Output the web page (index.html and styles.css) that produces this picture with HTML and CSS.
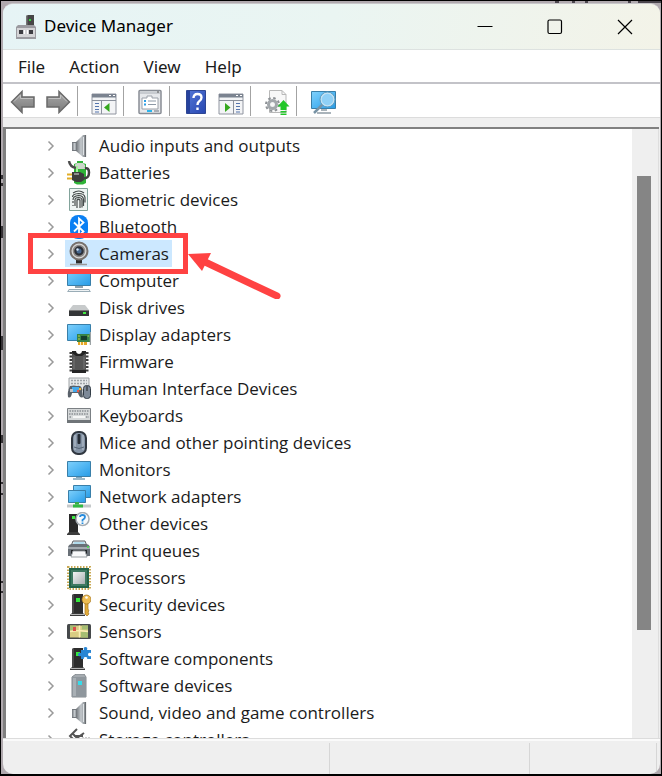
FILE: index.html
```html
<!DOCTYPE html>
<html lang="en">
<head>
<meta charset="utf-8">
<title>Device Manager</title>
<link rel="stylesheet" href="styles.css">
</head>
<body>
<svg class="defs" aria-hidden="true">
  <defs>
    <linearGradient id="screen" x1="0" y1="0" x2="1" y2="1"><stop offset="0" stop-color="#7fd0fb"/><stop offset=".55" stop-color="#4db4f2"/><stop offset="1" stop-color="#279be6"/></linearGradient>
    <linearGradient id="metal" x1="0" y1="0" x2="1" y2="0"><stop offset="0" stop-color="#6f7479"/><stop offset=".5" stop-color="#c3c8cc"/><stop offset="1" stop-color="#7d8287"/></linearGradient>
    <linearGradient id="arrow" x1="0" y1="0" x2="0" y2="1"><stop offset="0" stop-color="#a9a9a9"/><stop offset="1" stop-color="#7a7a7a"/></linearGradient>
    <linearGradient id="help" x1="0" y1="0" x2="1" y2="1"><stop offset="0" stop-color="#5478d8"/><stop offset="1" stop-color="#2746b0"/></linearGradient>
    <linearGradient id="die" x1="0" y1="0" x2="1" y2="1"><stop offset="0" stop-color="#f2f4f4"/><stop offset="1" stop-color="#a9b0b2"/></linearGradient>
    <symbol id="chevron" viewBox="0 0 8 14"><path d="M1.500 2.500 6 7l-4.500 4.500" fill="none" stroke="#9a9a9a" stroke-width="1.500"/></symbol>
    <symbol id="speaker" viewBox="0 0 24 24"><path d="M5 8h5v9H5z" fill="url(#metal)"/><path d="M9 8l7-7h3v22h-3l-7-6z" fill="url(#metal)"/><path d="M5 8h5v1H5zM5 16h5v1H5z" fill="#74797e"/><path d="M18.500 1v22" stroke="#6a6e72" stroke-width="1.200"/><path d="M16.500 3v18" stroke="#dfe3e6"/></symbol>
    <symbol id="tower" viewBox="0 0 24 24"><path d="M5 2l2-1h9v19H5z" fill="#2d2d2d"/><path d="M5 2v18h2V1z" fill="#4a4a4a"/><path d="M3 22l2-2h11l2 2v1H3z" fill="#3a3a3a"/><path d="M4 21.500h13" stroke="#b5b5b5"/><path d="M9 5h4v4H9z" fill="#35e83c"/></symbol>
  </defs>
</svg>
<div class="desktop">
<main class="window">
  <header class="titlebar">
    <svg class="app-icon" viewBox="0 0 20 24" aria-hidden="true"><path d="M10 1l2-1h6v12h-8z" fill="#464646"/><path d="M10 1v11h1.500V0z" fill="#747474"/><path d="M13 4h2v2h-2z" fill="#2fd63a"/><path d="M0 12l2-2h16l2 2v12H0z" fill="#9b9ba0"/><path d="M1 13h18v9H1z" fill="#d4d4d6"/><path d="M3 15h4v4H3zM13 15h4v4h-4z" fill="#3d3d42"/><path d="M8 15h1v4H8zM11 15h1v4h-1z" fill="#fff"/></svg>
    <h1>Device Manager</h1>
    <button class="caption" aria-label="Minimize"><svg viewBox="0 0 16 16"><path d="M.5 7.500h15"/></svg></button>
    <button class="caption" aria-label="Maximize"><svg viewBox="0 0 16 16"><rect x="1" y="1" width="13.500" height="13.500" rx="1.500"/></svg></button>
    <button class="caption" aria-label="Close"><svg viewBox="0 0 16 16"><path d="M1 1l14 14M15 1L1 15"/></svg></button>
  </header>
  <nav class="menu">
    <button>File</button><button>Action</button><button>View</button><button>Help</button>
  </nav>
  <div class="toolbar" role="toolbar" aria-label="Tools">
    <button aria-label="Back"><svg viewBox="0 0 26 26"><path d="M1.500 13 12 2.500V8h12v10H12v5.500z" fill="url(#arrow)" stroke="#6a6a6a" stroke-width="1.500"/><path d="M4 12.500l6.500-6.500v3.500H23" fill="none" stroke="#c2c2c2"/></svg></button>
    <button aria-label="Forward"><svg viewBox="0 0 26 26"><path d="M24.500 13 14 2.500V8H2v10h12v5.500z" fill="url(#arrow)" stroke="#6a6a6a" stroke-width="1.500"/><path d="M3.500 9.500h12V6l6.500 6.500" fill="none" stroke="#c2c2c2"/></svg></button>
    <i class="separator"></i>
    <button aria-label="Show console tree"><svg viewBox="0 0 26 26"><path d="M1 5h24v20H1z" fill="#f3f4f6" stroke="#9095a0"/><path d="M1 5h24v3.500H1z" fill="#7b8390"/><path d="M18 6.500h2M22 6.500h2" stroke="#fff"/><path d="M1 11.500h24M10.500 12v13" stroke="#8b919c"/><path d="M4 14.500h4M4 17.500h4M4 20.500h4M4 23h4" stroke="#5575ad"/><path d="M18.500 14v9L13 18.500z" fill="#36a81e"/></svg></button>
    <i class="separator"></i>
    <button aria-label="Properties"><svg viewBox="0 0 26 26"><rect x="2" y="1.500" width="22" height="23" rx="1" fill="#e6e8eb" stroke="#888d95" stroke-width="1.500"/><path d="M3 4h20" stroke="#a9aeb5"/><path d="M20 3h2" stroke="#555"/><path d="M5 9h5V7h5v2h6v11H5z" fill="#fff" stroke="#9ba0a8"/><path d="M7 12h2M7 15.500h2" stroke="#2b9de4" stroke-width="2"/><path d="M11 12h8M11 15.500h8" stroke="#8d99a6"/><path d="M10 22h5" stroke="#2bb5ed" stroke-width="2"/><path d="M17 22h5" stroke="#a9aeb5" stroke-width="2"/></svg></button>
    <i class="separator"></i>
    <button aria-label="Help"><svg viewBox="0 0 26 26"><path d="M3.500 1.500h19v23h-19z" fill="url(#help)" stroke="#2e4694"/><path d="M4 2h3v22H4z" fill="#26429d"/><path d="M10.500 9q0-4 4-4t4 3.500q0 2.500-2.500 4-1.500 1-1.500 3.500M14.500 18.500v2.500" fill="none" stroke="#fff" stroke-width="2.400"/></svg></button>
    <button aria-label="Show action pane"><svg viewBox="0 0 26 26"><path d="M1 5h24v20H1z" fill="#f3f4f6" stroke="#9095a0"/><path d="M1 5h24v3.500H1z" fill="#7b8390"/><path d="M18 6.500h2M22 6.500h2" stroke="#fff"/><path d="M1 11.500h24M15.500 12v13" stroke="#8b919c"/><path d="M18 14.500h4M18 17.500h4M18 20.500h4M18 23h4" stroke="#5575ad"/><path d="M7 14v9l5.500-4.500z" fill="#36a81e"/></svg></button>
    <i class="separator"></i>
    <button aria-label="Update driver"><svg viewBox="0 0 26 26"><path d="M5.500 1.500H18l4 4v18H5.500z" fill="#f8f8f8" stroke="#b8b8b8"/><path d="M18 1.500v4h4" fill="none" stroke="#b8b8b8"/><circle cx="8.500" cy="15.500" r="6.500" fill="none" stroke="#8d9195" stroke-width="2" stroke-dasharray="2.500 2.600"/><circle cx="8.500" cy="15.500" r="4" fill="#e6e8e9" stroke="#a2a7ab" stroke-width="3"/><circle cx="8.500" cy="15.500" r="2" fill="#f7f7f7"/><path d="M19.500 11l6 6.500h-3V21h-6v-3.500h-3z" fill="#23c729"/><path d="M16.500 22h6v1.500h-6zM16.500 24.500h6V26h-6z" fill="#23c729"/></svg></button>
    <i class="separator"></i>
    <button aria-label="Scan for hardware changes"><svg viewBox="0 0 26 26"><path d="M1.500 2.500h24v17h-24z" fill="url(#screen)" stroke="#397fa9"/><path d="M7 24h14M11 21h6" stroke="#aab4bb" stroke-width="2"/><path d="M12.500 15.500 4 24" stroke="#7893a5" stroke-width="2.500"/><circle cx="17.500" cy="10.500" r="6.500" fill="#8fd0f6" stroke="#c4e2f3" stroke-width="1.500"/><circle cx="17.500" cy="10.500" r="7.500" fill="none" stroke="#5f9dc0"/></svg></button>
  </div>
  <section class="content">
    <ul class="tree" id="devices" role="tree" aria-label="Devices">
      <li role="treeitem"><button aria-label="Expand"><svg><use href="#chevron"/></svg></button><svg class="icon"><use href="#speaker"/></svg><span>Audio inputs and outputs</span></li>
      <li role="treeitem"><button aria-label="Expand"><svg><use href="#chevron"/></svg></button><svg class="icon" viewBox="0 0 24 24"><path d="M7 3l3-1V0h6v2l3 1v19l-3 1.500h-6L7 22z" fill="#2eb337"/><path d="M8 3.500 10 2h6l2 2v4H8z" fill="#ccd6ca"/><path d="M10 5v14" stroke="#a5f29c" stroke-width="2"/><path d="M2 0q1 6 7 7" fill="none" stroke="#4b4b4b" stroke-width="2.500"/><path d="M5 11h8l4 2v6l-3 2H9l-4-2z" fill="#3d3d3d"/><path d="M7 13h5" stroke="#aaa" stroke-width="1.500"/><path d="M0 13.500h5M0 17.500h5" stroke="#e1ad28" stroke-width="2"/><path d="M16 17q6 1 6-5.500 0-5-4-4" fill="none" stroke="#414141" stroke-width="2.500"/></svg><span>Batteries</span></li>
      <li role="treeitem"><button aria-label="Expand"><svg><use href="#chevron"/></svg></button><svg class="icon" viewBox="0 0 24 24"><path d="M2.500.5h18v22h-18z" fill="#eff5f3" stroke="#82a39b"/><g fill="none" stroke="#454b4a"><path d="M6 5q6-4 11 0M5.500 9q0-3 6-3.500 6 0 6.500 4v5M6 12q0-4 5.500-4.500 5 0 5 4.500v6M6 15v-2M8 18v-6q0-2.500 3.500-2.500t3.500 3v7M10 20v-8q1.500-1.500 3 0v8M6 17v1" stroke-width="1.200"/></g></svg><span>Biometric devices</span></li>
      <li role="treeitem"><button aria-label="Expand"><svg><use href="#chevron"/></svg></button><svg class="icon" viewBox="0 0 24 24"><rect x="3" y="0" width="18" height="24" rx="8" fill="#0b80f3"/><path d="M7 7.500l9.500 9-4.500 4V3.500l4.500 4-9.500 9" fill="none" stroke="#fff" stroke-width="1.800"/></svg><span>Bluetooth</span></li>
      <li role="treeitem" class="marked" aria-selected="true"><button aria-label="Expand"><svg><use href="#chevron"/></svg></button><svg class="icon" viewBox="0 0 24 24"><path d="M9 17h6v5H9z" fill="#2c2c2c"/><path d="M3 23h17" stroke="#999" stroke-width="1.500"/><circle cx="12" cy="9.500" r="8.500" fill="#d7d7d7" stroke="#77716d" stroke-width="2"/><circle cx="12" cy="9.500" r="5.500" fill="#2c3038" stroke="#8f8c8a" stroke-width="1.500"/><circle cx="12" cy="9.500" r="2.500" fill="#47688f"/><circle cx="10.500" cy="8" r="1.200" fill="#d5e8fa"/></svg><span>Cameras</span>
        <svg class="callout-arrow" viewBox="0 0 94 50" aria-hidden="true"><path d="M0 5 23 4 14 22z" fill="#ff4242"/><path d="M15 12 89 47" stroke="#ff4242" stroke-width="7" stroke-linecap="round"/></svg>
      </li>
      <li role="treeitem"><button aria-label="Expand"><svg><use href="#chevron"/></svg></button><svg class="icon" viewBox="0 0 24 24"><path d="M.5.5h23v16H.5z" fill="url(#screen)" stroke="#397fa9"/><path d="M8 18h8" stroke="#91a2ab" stroke-width="2"/><path d="M2 20h20l2 3H0z" fill="#9aadb7"/><path d="M2 21.500h20" stroke="#eef2f4"/></svg><span>Computer</span></li>
      <li role="treeitem"><button aria-label="Expand"><svg><use href="#chevron"/></svg></button><svg class="icon" viewBox="0 0 24 24"><path d="M6 9h12l4 5H2z" fill="#c7cacb"/><path d="M2 14h20v6H2z" fill="#343637"/><path d="M2 14.500h20" stroke="#777"/><path d="M16 16h3v2h-3z" fill="#43ec43"/></svg><span>Disk drives</span></li>
      <li role="treeitem"><button aria-label="Expand"><svg><use href="#chevron"/></svg></button><svg class="icon" viewBox="0 0 24 24"><path d="M.5 1.500h23v16H.5z" fill="url(#screen)" stroke="#397fa9"/><path d="M10 11h13v8H10z" fill="#368247"/><path d="M23.500 9v13" stroke="#9ba3a5" stroke-width="1.500"/><path d="M14 13h6v4h-6z" fill="#173e2d"/><path d="M11 13h2M11 16h2M20.500 13h1.500" stroke="#b9d44b"/><path d="M11 19h9v3h-9z" fill="#e6a829"/><path d="M13.500 19v3M16.500 19v3" stroke="#fff2c8"/></svg><span>Display adapters</span></li>
      <li role="treeitem"><button aria-label="Expand"><svg><use href="#chevron"/></svg></button><svg class="icon" viewBox="0 0 24 24"><path d="M4 2v20M20 2v20" stroke="#3c3c3c" stroke-width="3" stroke-dasharray="2 1.500"/><path d="M5 1h4q0 3 3 3t3-3h4v22H5z" fill="#555"/><path d="M5 1h4q0 3 3 3t3-3h4v2l-4 3H9L5 3zM5 20h14v3H5z" fill="#252525"/><path d="M7 7v12M17 7v12" stroke="#777"/></svg><span>Firmware</span></li>
      <li role="treeitem"><button aria-label="Expand"><svg><use href="#chevron"/></svg></button><svg class="icon" viewBox="0 0 24 24"><path d="M2 1h20v12H2z" fill="#e6e8e9" stroke="#a0a4a7"/><path d="M4 3.500h16M4 6.500h16" stroke="#9ea3a7" stroke-width="1.500" stroke-dasharray="2 1"/><path d="M3 9q4-1 7 0 4-1 5 3l1 8q-3 2-5-4H5q-1 6-4 4-1-5 2-11z" fill="#59616a"/><path d="M5 10h7v5H5z" fill="#42a9ec"/><path d="M3 12h3v3H3z" fill="#bbc2c8"/><circle cx="13" cy="12" r="1.200" fill="#f2b83b"/><circle cx="11" cy="14" r="1.200" fill="#ee5b46"/><rect x="16.500" y="8.500" width="7" height="13" rx="3" fill="#7d8998" stroke="#333d47"/><path d="M20 9v5" stroke="#222"/></svg><span>Human Interface Devices</span></li>
      <li role="treeitem"><button aria-label="Expand"><svg><use href="#chevron"/></svg></button><svg class="icon" viewBox="0 0 24 24"><path d="M.5 4.500h23v14H.5z" fill="#d6d9da" stroke="#7b8084"/><path d="M0 16h24v3H0z" fill="#6f7478"/><path d="M2.500 7h19M2 10h20M2.500 13h2M19 13h3" stroke="#8c9195" stroke-width="1.500" stroke-dasharray="1.500 1"/><path d="M6 13h12" stroke="#fff" stroke-width="1.500"/></svg><span>Keyboards</span></li>
      <li role="treeitem"><button aria-label="Expand"><svg><use href="#chevron"/></svg></button><svg class="icon" viewBox="0 0 24 24"><rect x="5" y="1" width="14" height="22" rx="6" fill="#8493a5" stroke="#303740" stroke-width="2"/><path d="M8 4v15M16 4v15" stroke="#bac4cf"/><rect x="10.500" y="3" width="3" height="10" rx="1" fill="#262d36"/><path d="M7 16q5 3 10 0" fill="none" stroke="#566575"/></svg><span>Mice and other pointing devices</span></li>
      <li role="treeitem"><button aria-label="Expand"><svg><use href="#chevron"/></svg></button><svg class="icon" viewBox="0 0 24 24"><path d="M.5 3.500h23v15H.5z" fill="url(#screen)" stroke="#397fa9"/><path d="M9 19.500h6" stroke="#83a9bf"/><path d="M6 21h12" stroke="#79a0b7" stroke-width="1.500"/></svg><span>Monitors</span></li>
      <li role="treeitem"><button aria-label="Expand"><svg><use href="#chevron"/></svg></button><svg class="icon" viewBox="0 0 24 24"><path d="M6.500.5h17v12h-17z" fill="url(#screen)" stroke="#397fa9"/><path d="M1.500 5.500h17v12h-17z" fill="url(#screen)" stroke="#397fa9"/><path d="M10 17v3" stroke="#39aa49" stroke-width="4"/><path d="M0 21h24" stroke="#c5c9ca" stroke-width="3"/><path d="M6 21h10" stroke="#32ba42" stroke-width="3"/></svg><span>Network adapters</span></li>
      <li role="treeitem"><button aria-label="Expand"><svg><use href="#chevron"/></svg></button><svg class="icon" viewBox="0 0 24 24"><path d="M2 2h9v19H2z" fill="#292929"/><path d="M0 22l2-2h9l2 2v1H0z" fill="#3d3d3d"/><path d="M5 4h3v3H5z" fill="#3ee943"/><circle cx="15.500" cy="7" r="6.500" fill="#f7fafc" stroke="#a6adb3" stroke-width="1.500"/><path d="M13 5q0-2 2.500-2T18 5q0 1.500-2.500 3v1.500M15.500 10.500V12" fill="none" stroke="#278bdc" stroke-width="1.800"/></svg><span>Other devices</span></li>
      <li role="treeitem"><button aria-label="Expand"><svg><use href="#chevron"/></svg></button><svg class="icon" viewBox="0 0 24 24"><path d="M6 2h12l2 5H4z" fill="#e2e7ea" stroke="#5b6166"/><path d="M7 3h10l1 3H6z" fill="#b0dbec"/><path d="M1 8q1-3 4-3h14q3 0 4 3v9H1z" fill="#697077"/><path d="M1 8h22v2H1z" fill="#a4abb1"/><path d="M4 11h16v4H4z" fill="#25282b"/><path d="M6 12h12l2 6H4z" fill="#f8f9fa" stroke="#9aa0a4"/><path d="M20 8h2" stroke="#43e34b" stroke-width="1.500"/></svg><span>Print queues</span></li>
      <li role="treeitem"><button aria-label="Expand"><svg><use href="#chevron"/></svg></button><svg class="icon" viewBox="0 0 24 24"><rect x="1" y="1" width="22" height="22" fill="none" stroke="#c9a954" stroke-width="2" stroke-dasharray="1.500 1.500"/><path d="M2 2h20v20H2z" fill="#24634a"/><path d="M4 4h16v16H4z" fill="#3f7a62"/><path d="M6 6h12v12H6z" fill="url(#die)"/></svg><span>Processors</span></li>
      <li role="treeitem"><button aria-label="Expand"><svg><use href="#chevron"/></svg></button><svg class="icon"><use href="#tower"/></svg><svg class="icon overlay" viewBox="0 0 24 24"><path d="M18 10v11l2 2 2-2-1-2 1-1-1-2v-6z" fill="#e3ac3a" stroke="#a37421" stroke-width=".7"/><circle cx="19.500" cy="6.500" r="4.500" fill="#edbc53" stroke="#a37421" stroke-width=".7"/><circle cx="19.500" cy="4.500" r="1.300" fill="#fff"/></svg><span>Security devices</span></li>
      <li role="treeitem"><button aria-label="Expand"><svg><use href="#chevron"/></svg></button><svg class="icon" viewBox="0 0 24 24"><rect x="0" y="4" width="24" height="15" rx="1.500" fill="#46494b"/><path d="M3 5.500h18v12H3z" fill="#d9cd83"/><path d="M3 5.500h6v5H3zM14 12h7v5.500h-7zM15 5.500h6v4h-6z" fill="#a6be72"/><path d="M12.500 5.500v12M3 11.500l9-1 9 1" fill="none" stroke="#faeeb4" stroke-width="1.500"/><path d="M6 7h3v4H6z" fill="#dd4e4a"/></svg><span>Sensors</span></li>
      <li role="treeitem"><button aria-label="Expand"><svg><use href="#chevron"/></svg></button><svg class="icon"><use href="#tower"/></svg><svg class="icon overlay" viewBox="0 0 24 24"><path d="M14 3h3q-1-3 1.500-3T20 3h4v3q-3-1-3 1.500t3 1.500v3h-4q1-2-1.500-2T17 12h-3V9q-3 1-3-1.500T14 6z" fill="#2986d4"/></svg><span>Software components</span></li>
      <li role="treeitem"><button aria-label="Expand"><svg><use href="#chevron"/></svg></button><svg class="icon" viewBox="0 0 24 24"><path d="M5 3l4-3h8l2 3v20H5z" fill="#a5abb0" stroke="#83898e"/><path d="M5 3h14v20H5z" fill="#8f979d"/><path d="M6 4h3v18H6z" fill="#a9b0b5"/><path d="M11 7h4v4h-4z" fill="#35dcea"/></svg><span>Software devices</span></li>
      <li role="treeitem"><button aria-label="Expand"><svg><use href="#chevron"/></svg></button><svg class="icon"><use href="#speaker"/></svg><span>Sound, video and game controllers</span></li>
      <li role="treeitem"><button aria-label="Expand"><svg><use href="#chevron"/></svg></button><svg class="icon" viewBox="0 0 24 24"><path d="M10 1 3 8l7 7M5 5l5 5 7-5M7 8h9" fill="none" stroke="#555" stroke-width="2"/><path d="M16 9v5M19 9v5M22 9v5" stroke="#999"/></svg><span>Storage controllers</span></li>
    </ul>
    <div class="scrollbar" role="scrollbar" aria-label="Devices" aria-controls="devices" aria-valuenow="10"><div class="thumb"></div></div>
  </section>
  <footer class="status"><div></div><div></div><div></div></footer>
</main>
</div>
</body>
</html>
```
FILE: styles.css
```css
*,
*::before { box-sizing: border-box; }

body {
  margin: 0;
  font: 17px/27px "Noto Sans", "Open Sans", sans-serif;
  color: #1b1b1b;
}

button {
  border: 0;
  padding: 0;
  background: none;
  font: inherit;
  color: inherit;
}

.defs {
  position: absolute;
  width: 0;
  height: 0;
}

.desktop {
  display: flex;
  height: 100vh;
  padding: 2px 1px 0 2px;
  border: 1px solid #000;
  border-bottom-width: 2px;
  background:
    linear-gradient(90deg, transparent 84%, #4a454c 84% 84.5%, transparent 84.5% 86.500%, #4a454c 86.500% 87%, transparent 87% 88.500%, #4a454c 88.500% 89%, transparent 89% 95%, #4a454c 95% 95.500%, transparent 95.500% 96.500%, #4a454c 96.500%) 0 0 / 100% 2px no-repeat,
    linear-gradient(transparent 174px, #343034 174px 178px, transparent 178px 182px, #343034 182px 185px, transparent 185px 225px, #343034 225px 237px, transparent 237px 335px, #343034 335px 349px, transparent 349px 434px, #343034 434px 442px, transparent 442px 481px, #343034 481px 483px, transparent 483px 492px, #343034 492px 494px, transparent 494px 580px, #343034 580px 582px, transparent 582px 590px, #343034 590px 592px, transparent 592px) 0 0 / 2px 100% no-repeat,
    #b0a9ae;
}

.window {
  flex: 1;
  min-width: 0;
  display: flex;
  flex-direction: column;
  overflow: hidden;
  border-top: 1px solid #c9c7ca;
  border-radius: 10px;
  background: #efefef;
}

.titlebar {
  display: flex;
  align-items: center;
  flex: 0 0 46px;
  padding-left: 13px;
  border-bottom: 1px solid #dde2e0;
  background: linear-gradient(100deg, #e6f4f5, #eaf5f2 50%, #f3f3e8);
  color: #000;
}

.app-icon {
  width: 20px;
  height: 24px;
}

.titlebar h1 {
  flex: 1;
  margin: 0 0 2px 8px;
  font-size: 17px;
  font-weight: 400;
}

.caption {
  display: flex;
  justify-content: center;
  width: 70px;
}

.caption svg {
  width: 16px;
  height: 16px;
  fill: none;
  stroke: #000;
  stroke-width: 1.2;
}

.menu {
  display: flex;
  flex: 0 0 34px;
  padding: 0 3px;
  border-bottom: 2px solid #c3c3c8;
  background: #fff;
}

.menu button { padding: 0 12px; }

.toolbar {
  display: flex;
  align-items: center;
  flex: 0 0 34px;
  padding-left: 2px;
  border-bottom: 1px solid #dcdcdc;
  background: #fff;
}

.toolbar button {
  display: flex;
  justify-content: center;
  width: 35px;
  padding-top: 2px;
}

.toolbar svg {
  width: 26px;
  height: 26px;
}

.separator {
  width: 1px;
  height: 30px;
  margin: 0 8px 0 2px;
  background: #a3a3a3;
}

.content {
  display: flex;
  flex: 1;
  min-height: 0;
  margin: 9px 1px 0 0;
  border: solid #808080;
  border-width: 2px 0 0 3px;
}

.tree {
  flex: 1;
  min-width: 0;
  margin: 0;
  padding: 3px 0 0 40px;
  overflow: hidden;
  background: #fff;
  font-family: "Open Sans", "Noto Sans", sans-serif;
  list-style: none;
}

.tree li {
  position: relative;
  display: flex;
  align-items: center;
  height: 27px;
  white-space: nowrap;
}

.tree button {
  display: flex;
  width: 21px;
}

.tree button svg {
  width: 8px;
  height: 14px;
  margin-left: 1px;
}

.icon {
  flex: none;
  width: 24px;
  height: 24px;
}

.icon.overlay { margin-left: -24px; }

.tree span { padding: 0 3px 0 8px; }

.marked { z-index: 1; }

.marked .icon {
  box-shadow: -2px 0 #cce8ff;
}

.marked .icon,
.marked span {
  height: 27px;
  background: #cce8ff;
}

.marked::before {
  content: "";
  position: absolute;
  top: -7px;
  left: -18px;
  width: 160px;
  height: 41px;
  border: 5px solid #ff4242;
}

.callout-arrow {
  position: absolute;
  top: 9px;
  left: 142px;
  width: 94px;
  height: 50px;
}

.scrollbar {
  width: 27px;
  padding: 47px 7px 108px 5px;
  border-right: 1px solid #dedede;
}

.thumb {
  height: 100%;
  background: #858585;
}

.status {
  display: flex;
  flex: 0 0 36px;
  padding: 4px 3px 0 0;
  border-top: 1px solid #dcdcdc;
  box-shadow: inset 0 2px #fafafa;
}

.status div {
  flex: 200;
  border-right: 1px solid #d6d6d6;
}

.status div:first-child { flex-grow: 327; }
.status div:last-child { flex-grow: 127; }
```
